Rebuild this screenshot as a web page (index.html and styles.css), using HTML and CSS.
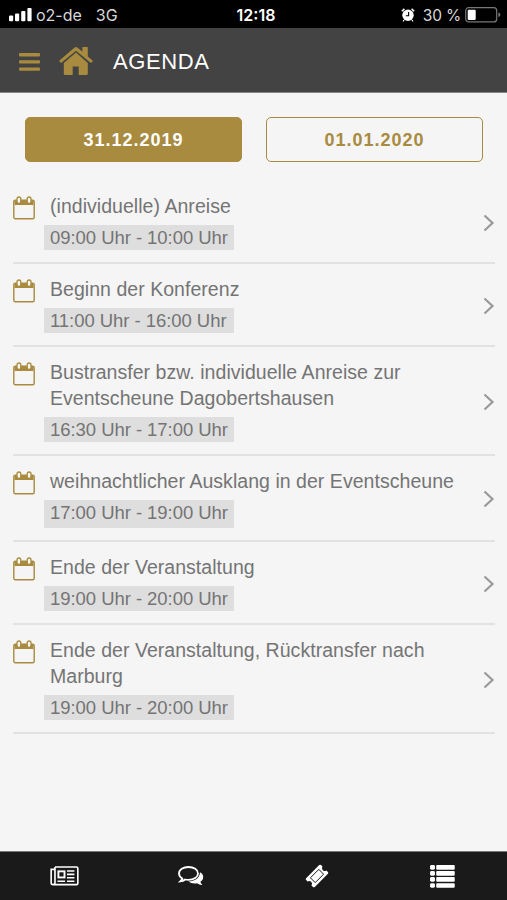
FILE: index.html
```html
<!DOCTYPE html>
<html lang="de">
<head>
  <meta charset="UTF-8">
  <meta name="viewport" content="width=device-width, initial-scale=1.0">
  <title>Agenda</title>
  <link rel="stylesheet" href="styles.css">
</head>
<body>
  <!-- Shared icons -->
  <svg class="sprite" aria-hidden="true">
    <symbol id="icon-calendar" viewBox="0 0 22 24">
      <path d="M1.500 4.500h19v4.500h-19z" fill="currentColor"/>
      <rect x=".8" y="4.300" width="20.400" height="18.400" rx="1.500" fill="none" stroke="currentColor" stroke-width="1.400"/>
      <rect x="4" y="1" width="3.800" height="6.400" rx="1.900" fill="#f5f5f5" stroke="currentColor" stroke-width="1.300"/>
      <rect x="14.200" y="1" width="3.800" height="6.400" rx="1.900" fill="#f5f5f5" stroke="currentColor" stroke-width="1.300"/>
    </symbol>
    <symbol id="icon-chevron" viewBox="0 0 12 18">
      <path d="M1.500 1.500L9.500 9l-8 7.500" fill="none" stroke="currentColor" stroke-width="2.200"/>
    </symbol>
  </svg>

  <div class="app">
    <!-- Status bar -->
    <div class="status-bar">
      <div class="status-left">
        <svg class="signal" viewBox="0 0 23 14" fill="#fff">
          <rect x="0" y="7.5" width="4.2" height="5.7" rx="1"/>
          <rect x="6" y="5.5" width="4.2" height="7.7" rx="1"/>
          <rect x="12.2" y="3" width="4.2" height="10.2" rx="1"/>
          <rect x="18.4" y="0" width="4.2" height="13.2" rx="1"/>
        </svg>
        <span class="carrier">o2-de</span>
        <span class="network">3G</span>
      </div>
      <span class="clock">12:18</span>
      <div class="status-right">
        <svg class="alarm" viewBox="0 0 14 14">
          <circle cx="7" cy="7.3" r="5.7" fill="#fff"/>
          <path d="M.8 3.2L3.4.9M13.2 3.2L10.6.9" stroke="#fff" stroke-width="1.5"/>
          <path d="M3 12l-1 1.3M11 12l1 1.3" stroke="#fff" stroke-width="1.2"/>
          <path d="M7.6 4v3.8H4.8" fill="none" stroke="#000" stroke-width="1.1"/>
        </svg>
        <span class="percent">30 %</span>
        <svg class="battery" viewBox="0 0 36 16">
          <rect x=".7" y=".7" width="31" height="14.2" rx="3" fill="none" stroke="#777" stroke-width="1.2"/>
          <rect x="2.7" y="2.7" width="8" height="10.2" rx="1" fill="#fff"/>
          <path d="M33.4 5.5q2 .6 2 2.3t-2 2.3z" fill="#777"/>
        </svg>
      </div>
    </div>

    <header class="header">
      <svg class="menu-icon" viewBox="0 0 21 18" fill="currentColor">
        <rect width="21" height="3.4" rx="1"/>
        <rect y="7.2" width="21" height="3.4" rx="1"/>
        <rect y="14.4" width="21" height="3.4" rx="1"/>
      </svg>
      <svg class="home-icon" viewBox="0 0 34 28" fill="currentColor">
        <path d="M17 5.6L4.800 16v10.400q0 1.600 1.400 1.600h7.500v-8.400h6V28h7.600q1.500 0 1.500-1.600V16z"/>
        <path d="M15.400.7q1.600-1.300 3.200 0L23.400 4.800V.8q0-.8.8-.8H28q.8 0 .8.800v8.600l4.500 3.800q.7.600.2 1.200l-1 1q-.6.500-1.200 0L17 3.700 2.700 15.400q-.6.500-1.200 0l-1-1q-.5-.6.2-1.200z"/>
      </svg>
      <h1>AGENDA</h1>
    </header>

    <main class="content">
      <div class="tabs">
        <button class="tab active">31.12.2019</button>
        <button class="tab">01.01.2020</button>
      </div>

      <ul class="agenda">
        <li class="entry">
          <svg class="calendar"><use href="#icon-calendar"/></svg>
          <div class="details">
            <p class="title">(individuelle) Anreise</p>
            <span class="time">09:00 Uhr - 10:00 Uhr</span>
          </div>
          <svg class="chevron"><use href="#icon-chevron"/></svg>
        </li>
        <li class="entry">
          <svg class="calendar"><use href="#icon-calendar"/></svg>
          <div class="details">
            <p class="title">Beginn der Konferenz</p>
            <span class="time">11:00 Uhr - 16:00 Uhr</span>
          </div>
          <svg class="chevron"><use href="#icon-chevron"/></svg>
        </li>
        <li class="entry">
          <svg class="calendar"><use href="#icon-calendar"/></svg>
          <div class="details">
            <p class="title">Bustransfer bzw. individuelle Anreise zur<br>Eventscheune Dagobertshausen</p>
            <span class="time">16:30 Uhr - 17:00 Uhr</span>
          </div>
          <svg class="chevron"><use href="#icon-chevron"/></svg>
        </li>
        <li class="entry entry-tall">
          <svg class="calendar"><use href="#icon-calendar"/></svg>
          <div class="details">
            <p class="title">weihnachtlicher Ausklang in der Eventscheune</p>
            <span class="time">17:00 Uhr - 19:00 Uhr</span>
          </div>
          <svg class="chevron"><use href="#icon-chevron"/></svg>
        </li>
        <li class="entry">
          <svg class="calendar"><use href="#icon-calendar"/></svg>
          <div class="details">
            <p class="title">Ende der Veranstaltung</p>
            <span class="time">19:00 Uhr - 20:00 Uhr</span>
          </div>
          <svg class="chevron"><use href="#icon-chevron"/></svg>
        </li>
        <li class="entry">
          <svg class="calendar"><use href="#icon-calendar"/></svg>
          <div class="details">
            <p class="title">Ende der Veranstaltung, Rücktransfer nach<br>Marburg</p>
            <span class="time">19:00 Uhr - 20:00 Uhr</span>
          </div>
          <svg class="chevron"><use href="#icon-chevron"/></svg>
        </li>
      </ul>
    </main>

    <!-- Bottom navigation -->
    <nav class="bottom-nav">
      <a href="#" aria-label="News">
        <svg width="29" height="20" viewBox="0 0 30 21" fill="none" stroke="#fff" stroke-width="1.7">
          <path d="M5 1h22.500q1.500 0 1.500 1.500V18q0 1.500-1.500 1.500H3q-2 0-2-2V3.500h4M5 1v16.500q0 2-2 2"/>
          <rect x="8.600" y="5.600" width="6.400" height="6.400" stroke-width="2"/>
          <path d="M17.600 5.200h7.800M17.600 8.800h7.800M17.600 12.400h7.800M7.600 16h8M17.600 16h7.800"/>
        </svg>
      </a>
      <a href="#" aria-label="Chat">
        <svg width="26" height="21" viewBox="0 0 26 21">
          <path d="M22 6.200c2.200 1.200 3.200 2.800 3.200 4.700 0 2-1 3.600-2.800 4.800q.5 1.900 2 3.300-2.900.2-5.200-1.800c-3.400.6-6.700-.1-8.700-1.700 6.300-.1 11.300-3.700 11.500-9.300z" fill="#fff"/>
          <path d="M10.500 1C5.200 1 1 3.700 1 7.500c0 2 1.200 3.800 3.200 5q-.4 1.700-1.700 2.800 2.700-.2 4.700-1.800 1.600.4 3.300.4c5.300 0 9.500-2.700 9.500-6.400S15.800 1 10.500 1z" fill="#1a1a1a" stroke="#fff" stroke-width="1.800"/>
        </svg>
      </a>
      <a href="#" aria-label="Tickets">
        <svg width="24" height="24" viewBox="0 0 24 24">
          <path d="M14.200 1.100q.9-.9 1.800 0l1.500 1.500a2.800 2.800 0 0 0 3.900 3.900l1.500 1.500q.9.900 0 1.800L9.800 22.900q-.9.900-1.800 0l-1.500-1.500a2.800 2.800 0 0 0-3.900-3.900L1.100 16q-.9-.9 0-1.800z" fill="#fff"/>
          <path d="M13.800 5.400l4.800 4.800-8.400 8.400-4.800-4.800z" fill="#fff" stroke="#1a1a1a" stroke-width="1"/>
        </svg>
      </a>
      <a href="#" aria-label="Agenda">
        <svg width="25" height="23" viewBox="0 0 25.500 23.600" fill="#fff">
          <rect x="0" y="0" width="5" height="4.800" rx="1.500"/><rect x="6.300" y="0" width="19" height="4.800" rx="1"/>
          <rect x="0" y="6.200" width="5" height="4.800" rx="1.500"/><rect x="6.300" y="6.200" width="19" height="4.800" rx="1"/>
          <rect x="0" y="12.400" width="5" height="4.800" rx="1.500"/><rect x="6.300" y="12.400" width="19" height="4.800" rx="1"/>
          <rect x="0" y="18.600" width="5" height="4.800" rx="1.500"/><rect x="6.300" y="18.600" width="19" height="4.800" rx="1"/>
        </svg>
      </a>
    </nav>
  </div>
</body>
</html>
```
FILE: styles.css
```css
:root {
  --gold: #a98b3f;
  --background: #f5f5f5;
  --header-bg: #434343;
  --nav-bg: #1a1a1a;
  --text: #747474;
}

* {
  box-sizing: border-box;
}

body {
  margin: 0;
  font-family: "Liberation Sans", Arial, sans-serif;
  color: var(--text);
  background: var(--background);
}

.sprite {
  display: none;
}

.app {
  display: flex;
  flex-direction: column;
  height: 100vh;
  overflow: hidden;
}

/* Status bar */
.status-bar {
  display: grid;
  grid-template-columns: 1fr auto 1fr;
  align-items: center;
  height: 28px;
  padding: 2px 6px 0 9px;
  background: #000;
  color: #d8d8d8;
  font-family: Inter, sans-serif;
  font-size: 16px;
}

.status-left,
.status-right {
  display: flex;
  align-items: center;
}

.status-right {
  justify-content: flex-end;
}

.signal {
  width: 23px;
  height: 14px;
  margin-right: 4px;
}

.network {
  margin-left: 14px;
}

.clock {
  padding-left: 2px;
  color: #fff;
  font-weight: 600;
}

.alarm {
  width: 14px;
  height: 14px;
  margin-right: 8px;
}

.percent {
  font-size: 15.5px;
  letter-spacing: -0.2px;
}

.battery {
  width: 36px;
  height: 16px;
  margin-left: 4px;
}

/* Header */
.header {
  display: flex;
  align-items: center;
  height: 65px;
  padding: 4px 19px 0;
  background: var(--header-bg);
  border-bottom: 1px solid #888;
  color: var(--gold);
}

.menu-icon {
  width: 21px;
  height: 18px;
}

.home-icon {
  width: 34px;
  height: 28px;
  margin: -3px 20px 0 19px;
}

h1 {
  margin: 0;
  color: #fff;
  font-size: 22px;
  font-weight: 400;
  letter-spacing: 0.6px;
}

.content {
  flex: 1;
}

/* Day tabs */
.tabs {
  display: grid;
  grid-template-columns: 1fr 1fr;
  gap: 24px;
  padding: 24px 24px 19px 25px;
}

.tab {
  height: 45px;
  padding: 2px 0 0;
  border: 1.5px solid var(--gold);
  border-radius: 5px;
  background: transparent;
  color: var(--gold);
  font-family: inherit;
  font-size: 18px;
  font-weight: 700;
  letter-spacing: 1px;
}

.tab.active {
  background: var(--gold);
  color: #fff;
}

/* Agenda list */
.agenda {
  list-style: none;
  margin: 0;
  padding: 0 12px 0 13px;
}

.entry {
  display: flex;
  align-items: center;
  padding: 12px 0;
  border-bottom: 2px solid #e2e2e2;
}

.calendar {
  align-self: flex-start;
  flex: none;
  width: 22px;
  height: 24px;
  margin: 3px 9px 0 0;
  color: var(--gold);
}

.details {
  flex: 1;
}

.title {
  margin: 0 0 6px 6px;
  font-size: 19.5px;
  letter-spacing: 0.04px;
  line-height: 26px;
  white-space: nowrap;
}

.time {
  display: block;
  width: 190px;
  height: 25px;
  padding-left: 6px;
  background: #dedede;
  font-size: 18.5px;
  letter-spacing: -0.05px;
  line-height: 26px;
  white-space: nowrap;
}

.entry-tall .time {
  height: 28px;
}

.chevron {
  flex: none;
  width: 12px;
  height: 18px;
  margin-top: 2px;
  color: #999;
}

/* Bottom navigation */
.bottom-nav {
  display: grid;
  grid-template-columns: repeat(4, 126px);
  justify-content: center;
  height: 49px;
  background: var(--nav-bg);
  border-top: 1px solid #777;
}

.bottom-nav a {
  display: flex;
  align-items: center;
  justify-content: center;
}
```
